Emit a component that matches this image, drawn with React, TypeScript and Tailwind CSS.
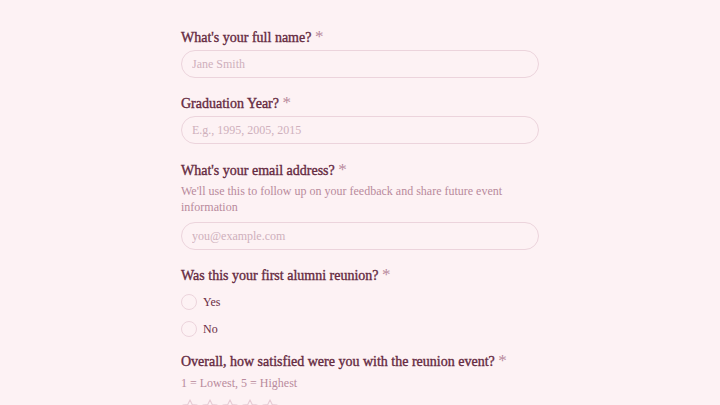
import { useState } from 'react'

const serif = { fontFamily: '"Liberation Serif", "DejaVu Serif", serif' }

function Label({ children }: { children: React.ReactNode }) {
  return (
    <label className="block text-[14px] leading-5 text-[#652a41] [-webkit-text-stroke:0.35px_#652a41]">
      {children}{' '}
      <span className="text-[17px] text-[#b98a9c] [-webkit-text-stroke:0px]">*</span>
    </label>
  )
}

function Field({ placeholder, type = 'text', className = 'mt-[2px]' }: { placeholder: string; type?: string; className?: string }) {
  return (
    <input
      type={type}
      placeholder={placeholder}
      style={serif}
      className={`${className} block h-[28px] w-full rounded-full border border-[#ecd4dc] bg-[#fdf2f4] px-[10px] text-[12px] text-[#6b2d45] outline-none placeholder:text-[#cfb0bc]`}
    />
  )
}

function Star() {
  return (
    <svg width="18" height="18" viewBox="0 0 24 24" fill="none" stroke="#e6cbd4" strokeWidth="1.5" strokeLinejoin="round">
      <path d="M12 2.5l2.9 6.1 6.6.8-4.9 4.6 1.3 6.6L12 17.3l-5.9 3.3 1.3-6.6-4.9-4.6 6.6-.8z" />
    </svg>
  )
}

export default function App() {
  const [first, setFirst] = useState<string | null>(null)
  return (
    <div className="min-h-[405px] w-full overflow-hidden bg-[#fdf2f4]" style={serif}>
      <div className="mx-auto w-[358px] pt-[27px]">
        <Label>What's your full name?</Label>
        <Field placeholder="Jane Smith" />

        <div className="mt-[15px]">
          <Label>Graduation Year?</Label>
          <Field placeholder="E.g., 1995, 2005, 2015" />
        </div>

        <div className="mt-[16px]">
          <Label>What's your email address?</Label>
          <p className="mt-[2px] text-[12px] leading-4 text-[#b98a9c]">
            We'll use this to follow up on your feedback and share future event information
          </p>
          <Field placeholder="you@example.com" type="email" className="mt-[7px]" />
        </div>

        <div className="mt-[15px]">
          <Label>Was this your first alumni reunion?</Label>
          <div className="mt-[7px] flex flex-col gap-[9px]">
            {['Yes', 'No'].map((opt) => (
              <button
                key={opt}
                onClick={() => setFirst(opt)}
                className="flex items-center gap-[6px] text-[12px] text-[#6b2d45]"
              >
                <span className="flex h-[16px] w-[16px] items-center justify-center rounded-full border border-[#ecd4dc] bg-[#fdf2f4]">
                  {first === opt && <span className="h-[8px] w-[8px] rounded-full bg-[#6b2d45]" />}
                </span>
                {opt}
              </button>
            ))}
          </div>
        </div>

        <div className="mt-[13px]">
          <Label>Overall, how satisfied were you with the reunion event?</Label>
          <p className="mt-[3px] text-[12px] leading-4 text-[#b98a9c]">1 = Lowest, 5 = Highest</p>
          <div className="mt-[7px] flex gap-[2px]">
            {[1, 2, 3, 4, 5].map((n) => (
              <Star key={n} />
            ))}
          </div>
        </div>
      </div>
    </div>
  )
}
